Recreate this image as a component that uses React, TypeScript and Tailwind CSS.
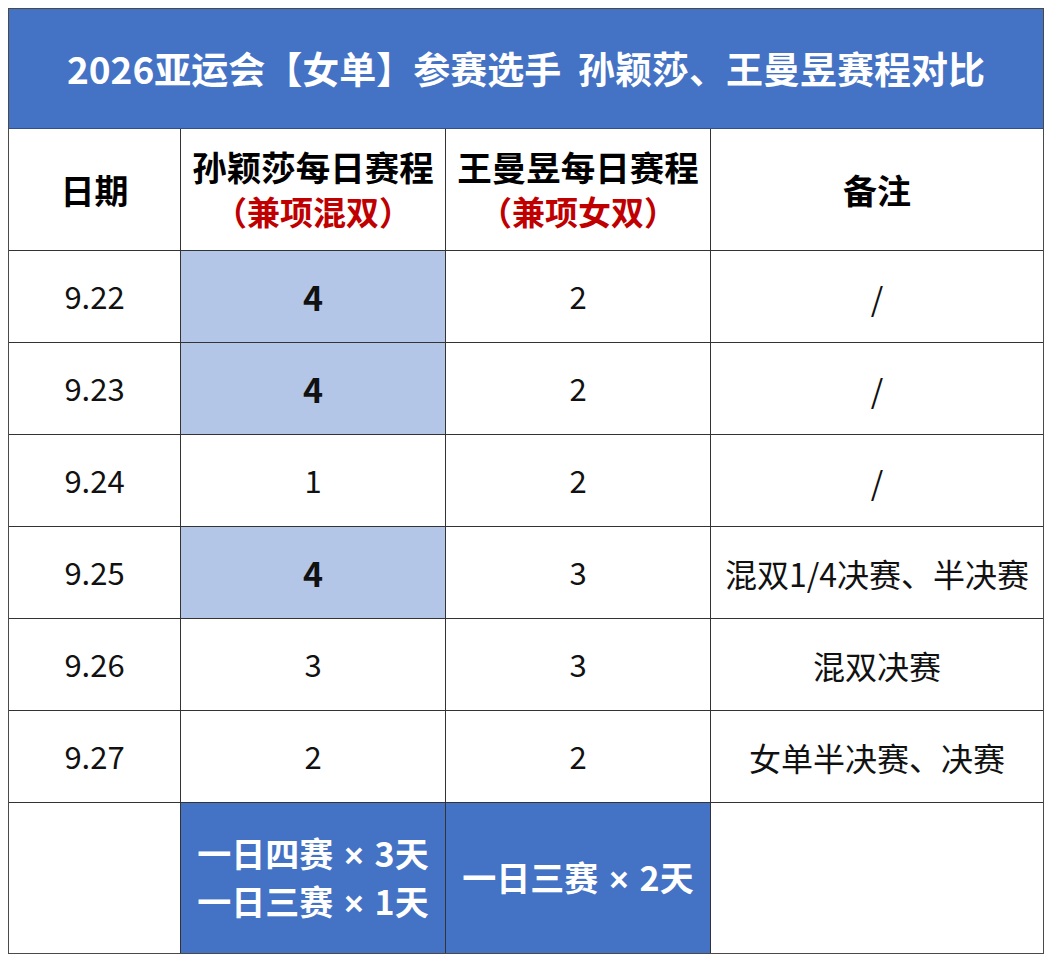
import React from "react";

const rows = [
  { d: "9.22", a: "4", hl: true, b: "2", n: "/" },
  { d: "9.23", a: "4", hl: true, b: "2", n: "/" },
  { d: "9.24", a: "1", hl: false, b: "2", n: "/" },
  { d: "9.25", a: "4", hl: true, b: "3", n: "混双1/4决赛、半决赛" },
  { d: "9.26", a: "3", hl: false, b: "3", n: "混双决赛" },
  { d: "9.27", a: "2", hl: false, b: "2", n: "女单半决赛、决赛" },
];

function Times() {
  return (
    <span
      className="inline-block font-bold text-[33px] mx-[11px]"
      style={{ fontFamily: '"Liberation Sans", sans-serif' }}
    >
      ×
    </span>
  );
}

export default function App() {
  return (
    <div
      className="w-[1050px] h-[960px] bg-white pt-[8px] pl-[8px]"
      style={{ fontFamily: '"Noto Sans CJK SC", "Noto Sans", sans-serif' }}
    >
      <div className="w-[1036px] border border-[#4a4a4a] bg-[#333]">
        <div className="h-[120px] bg-[#4472c4] flex items-center justify-center text-white font-bold text-[37px] border-b border-[#2f4f8f]">
          <span>2026亚运会【女单】参赛选手&nbsp;&nbsp;孙颖莎、王曼昱赛程对比</span>
        </div>
        <div className="grid grid-cols-[171px_264px_264px_1fr] grid-rows-[121px_repeat(6,91px)_150px] gap-px">
          <div className="bg-white flex items-center justify-center font-bold text-[34px] text-black">日期</div>
          <div className="bg-white flex flex-col items-center justify-center gap-[12px] font-bold text-black leading-none pb-[2px]">
            <span className="text-[34.5px]">孙颖莎每日赛程</span>
            <span className="text-[33px] text-[#c00000]">（兼项混双）</span>
          </div>
          <div className="bg-white flex flex-col items-center justify-center gap-[12px] font-bold text-black leading-none pb-[2px]">
            <span className="text-[34.5px]">王曼昱每日赛程</span>
            <span className="text-[33px] text-[#c00000]">（兼项女双）</span>
          </div>
          <div className="bg-white flex items-center justify-center font-bold text-[34px] text-black">备注</div>
          {rows.map((r) => (
            <React.Fragment key={r.d}>
              <div className="bg-white flex items-center justify-center text-[31px] text-[#111]">{r.d}</div>
              <div
                className={
                  r.hl
                    ? "bg-[#b4c6e7] flex items-center justify-center text-[34px] font-bold text-[#111]"
                    : "bg-white flex items-center justify-center text-[31px] text-[#111]"
                }
              >
                {r.a}
              </div>
              <div className="bg-white flex items-center justify-center text-[31px] text-[#111]">{r.b}</div>
              <div className="bg-white flex items-center justify-center text-[32px] text-[#111]">{r.n}</div>
            </React.Fragment>
          ))}
          <div className="bg-white" />
          <div className="bg-[#4472c4] flex flex-col items-center justify-center gap-[12px] text-white font-bold text-[34px] leading-none">
            <span>一日四赛<Times />3天</span>
            <span>一日三赛<Times />1天</span>
          </div>
          <div className="bg-[#4472c4] flex items-center justify-center text-white font-bold text-[34px] leading-none">
            <span>一日三赛<Times />2天</span>
          </div>
          <div className="bg-white" />
        </div>
      </div>
    </div>
  );
}
